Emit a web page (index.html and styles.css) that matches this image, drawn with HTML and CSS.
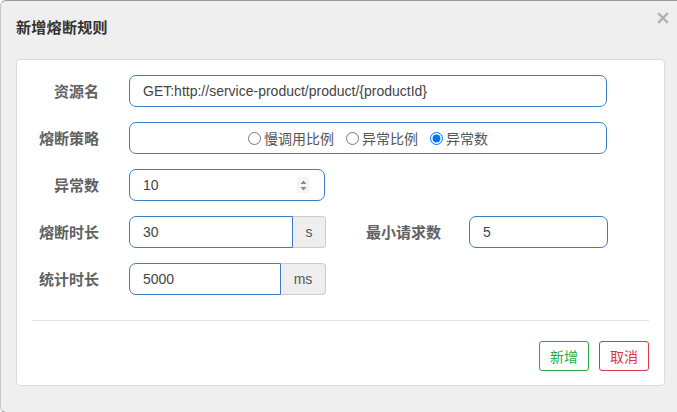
FILE: index.html
```html
<!DOCTYPE html>
<html lang="zh-CN">
<head>
<meta charset="utf-8">
<title>新增熔断规则</title>
<link rel="stylesheet" href="styles.css">
</head>
<body>
<div class="dialog">
  <div class="dialog-header">
    <h4 class="dialog-title">新增熔断规则</h4>
    <button class="close" type="button" aria-label="关闭">
      <svg width="12" height="12" viewBox="0 0 12 12"><path d="M1.2 1.2 L10.8 10.8 M10.8 1.2 L1.2 10.8" stroke="#b3b3b3" stroke-width="2.6" stroke-linecap="butt"/></svg>
    </button>
  </div>
  <div class="panel">
    <div class="row">
      <label class="label">资源名</label>
      <div class="control wide"><span class="value">GET:http://service-product/product/{productId}</span></div>
    </div>
    <div class="row">
      <label class="label">熔断策略</label>
      <div class="control wide radios">
        <label class="opt"><input type="radio" name="grade"><span>慢调用比例</span></label>
        <label class="opt"><input type="radio" name="grade"><span>异常比例</span></label>
        <label class="opt"><input type="radio" name="grade" checked><span>异常数</span></label>
      </div>
    </div>
    <div class="row">
      <label class="label">异常数</label>
      <div class="control num"><span class="value">10</span>
        <span class="spin"><svg width="7" height="11" viewBox="0 0 7 11"><path d="M3.5 0.5 L6.5 4 L0.5 4 Z M0.5 7 L6.5 7 L3.5 10.5 Z" fill="#8a8a8a"/></svg></span>
      </div>
    </div>
    <div class="row">
      <label class="label">熔断时长</label>
      <div class="group g-s">
        <div class="control gl"><span class="value">30</span></div>
        <span class="addon">s</span>
      </div>
      <label class="label label2">最小请求数</label>
      <div class="control small"><span class="value">5</span></div>
    </div>
    <div class="row">
      <label class="label">统计时长</label>
      <div class="group g-ms">
        <div class="control gl"><span class="value">5000</span></div>
        <span class="addon">ms</span>
      </div>
    </div>
    <hr class="divider">
    <div class="footer">
      <button class="btn btn-add" type="button">新增</button>
      <button class="btn btn-cancel" type="button">取消</button>
    </div>
  </div>
</div>
</body>
</html>
```
FILE: styles.css
```css
html, body {
  margin: 0;
  padding: 0;
  overflow: hidden;
  background: #ffffff;
}
body {
  font-family: "Liberation Sans", "Noto Sans CJK SC", sans-serif;
  font-size: 14px;
  color: #555;
}
.dialog {
  box-sizing: border-box;
  width: 700px;
  height: 413px;
  background: #efefef;
  border: 1px solid #9a9a9a;
  border-left-color: #c8c8c8;
  border-radius: 6px;
}
.dialog-header {
  height: 58px;
  display: flex;
  align-items: flex-start;
  justify-content: space-between;
  position: relative;
}
.dialog-title {
  margin: 16px 0 0 15px;
  font-family: "Noto Sans CJK SC", sans-serif;
  font-size: 15px;
  font-weight: bold;
  line-height: 20px;
  color: #333;
  letter-spacing: 0.3px;
}
.close {
  position: absolute;
  left: 655px;
  top: 10px;
  width: 14px;
  height: 14px;
  padding: 1px;
  border: 0;
  background: transparent;
  display: flex;
}
.panel {
  box-sizing: border-box;
  margin-left: 15px;
  width: 649px;
  height: 327px;
  background: #fff;
  border: 1px solid #dcdcdc;
  border-radius: 4px;
  padding: 15px 0 0 0;
  display: flex;
  flex-direction: column;
  gap: 15px;
}
.row {
  display: flex;
  align-items: center;
  height: 32px;
}
.label {
  box-sizing: border-box;
  width: 82px;
  text-align: right;
  font-family: "Noto Sans CJK SC", sans-serif;
  font-weight: bold;
  font-size: 15px;
  color: #616161;
  margin-right: 30px;
  line-height: 20px;
}
.label2 {
  width: 115px;
  margin-right: 28px;
}
.control {
  box-sizing: border-box;
  height: 32px;
  border: 1px solid #3b7ec0;
  border-radius: 7px;
  display: flex;
  align-items: center;
  padding-left: 13px;
  color: #444;
  font-size: 14px;
  background: #fff;
}
.wide { width: 478px; }
.num {
  width: 196px;
  justify-content: space-between;
  padding-right: 15px;
}
.spin {
  display: flex;
  align-items: center;
  justify-content: center;
  width: 12px;
  height: 16px;
  background: #f4f4f4;
}
.small { width: 139px; }
.radios {
  justify-content: center;
  padding-left: 0;
  gap: 12px;
}
.opt {
  display: flex;
  align-items: center;
  font-family: "Noto Sans CJK SC", sans-serif;
  font-size: 14px;
  color: #555;
  gap: 3px;
}
.opt input {
  margin: 1px 0 0 0;
  width: 13px;
  height: 13px;
  accent-color: #0075ff;
}
.group {
  display: flex;
  height: 32px;
}
.g-s { width: 197px; }
.g-ms { width: 197px; }
.gl {
  flex: 1;
  border-radius: 7px 0 0 7px;
}
.addon {
  box-sizing: border-box;
  height: 32px;
  display: flex;
  align-items: center;
  justify-content: center;
  background: #eeeeee;
  border: 1px solid #cccccc;
  border-left: 0;
  border-radius: 0 4px 4px 0;
  color: #555;
  font-size: 14px;
}
.g-s .addon { width: 33px; }
.g-ms .addon { width: 45px; }
.divider {
  margin: 10px 15px 0 15px;
  border: 0;
  border-top: 1px solid #e3e3e3;
  height: 0;
}
.footer {
  display: flex;
  justify-content: flex-end;
  gap: 10px;
  padding-right: 15px;
  margin-top: 5px;
}
.btn {
  box-sizing: border-box;
  width: 50px;
  height: 30px;
  background: #fff;
  border: 1px solid;
  border-radius: 3px;
  font-family: "Noto Sans CJK SC", sans-serif;
  font-size: 14px;
  padding: 0;
}
.btn-add { border-color: #28a745; color: #28a745; }
.btn-cancel { border-color: #dc3545; color: #dc3545; }
```
